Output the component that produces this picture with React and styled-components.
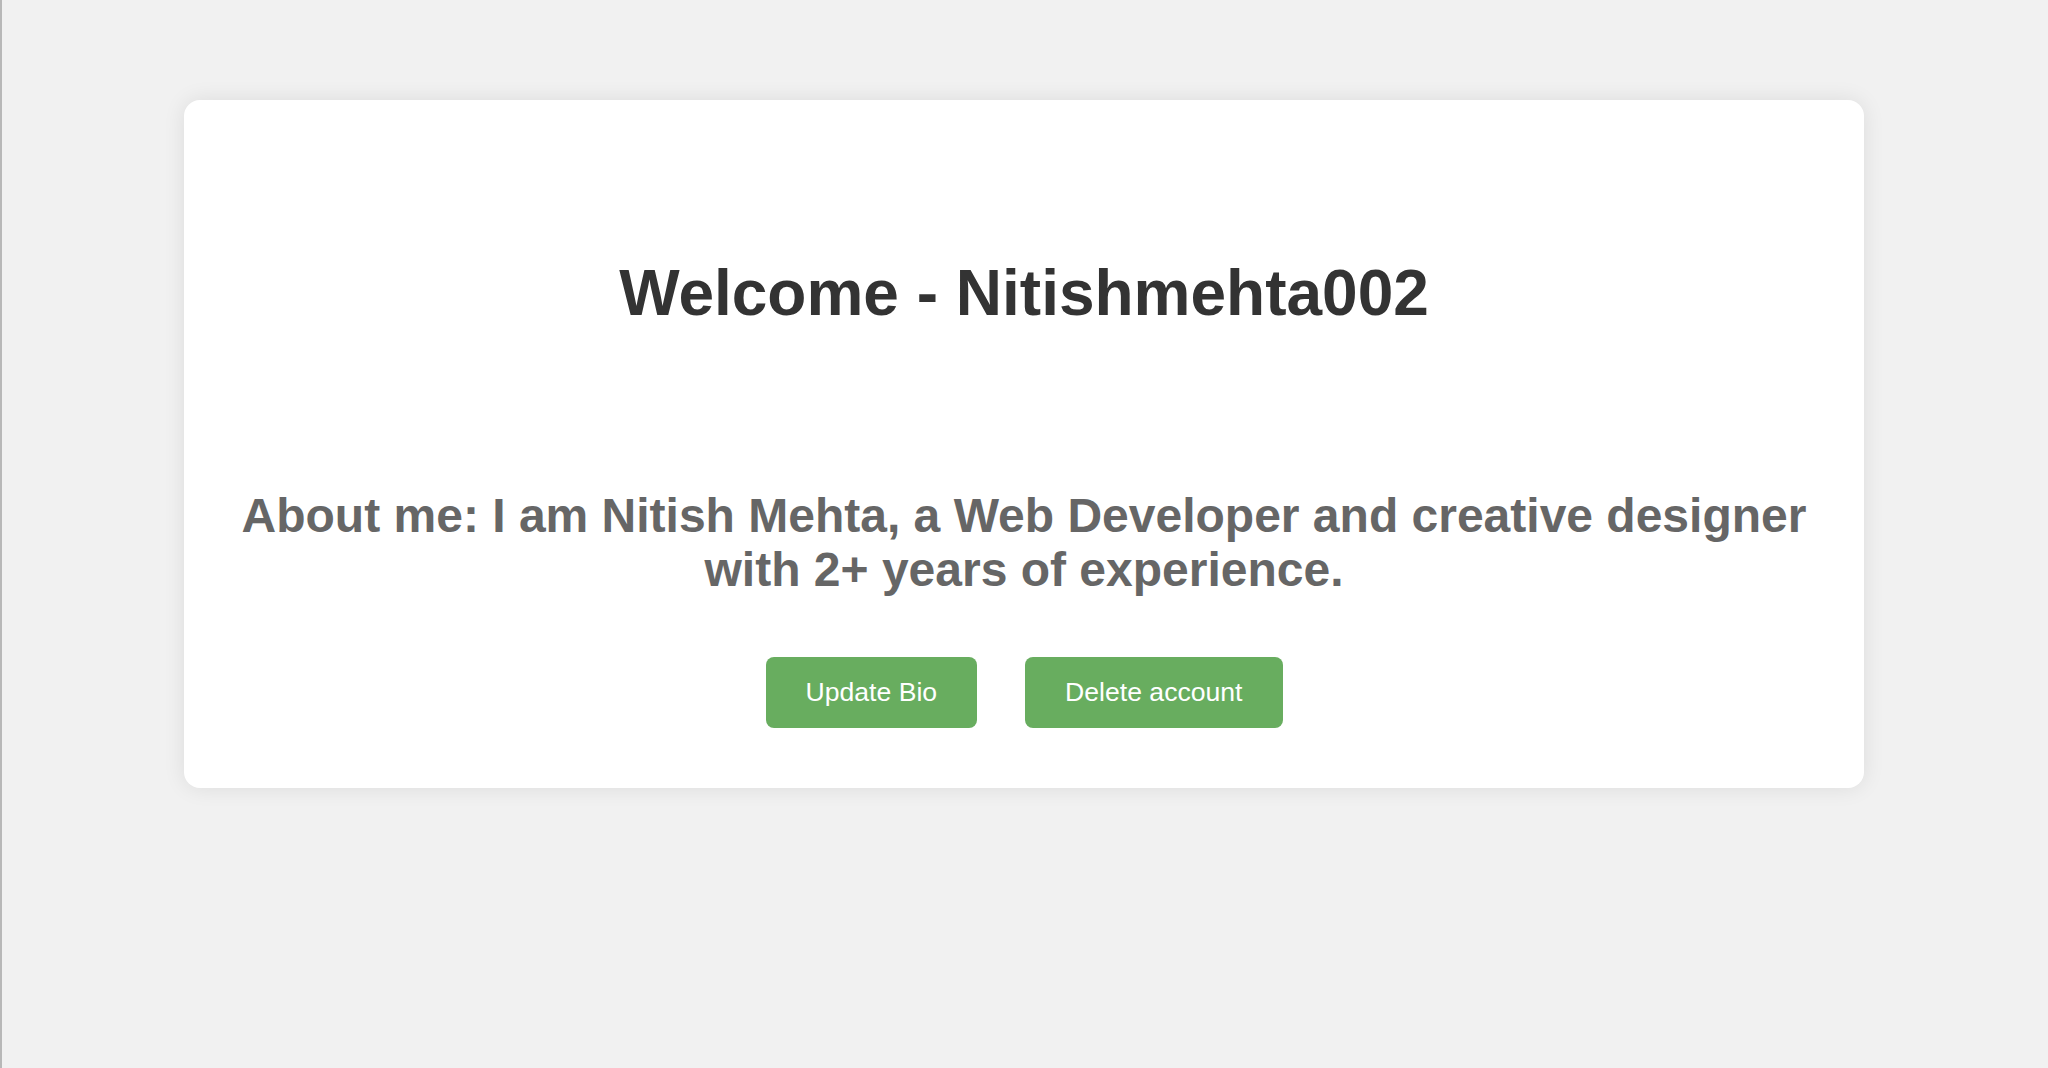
import { createGlobalStyle, styled } from "styled-components"

const GlobalStyle = createGlobalStyle`
    * {
        box-sizing: border-box;
    }
    body {
        margin: 0;
        background-color: #f1f1f1;
        font-family: "Liberation Sans", Arial, sans-serif;
    }
`

export default function App(){

    return(
        <SCPage>
            <GlobalStyle />
            <SCCard>
                <SCTitle>Welcome - Nitishmehta002</SCTitle>
                <SCBio>
                    About me: I am Nitish Mehta, a Web Developer and creative designer with 2+ years of experience.
                </SCBio>
                <SCActions>
                    <SCButton>Update Bio</SCButton>
                    <SCButton>Delete account</SCButton>
                </SCActions>
            </SCCard>
        </SCPage>
    )
}

const SCPage = styled.div`
    min-height: 100vh;
    background-color: #f1f1f1;
    padding-top: 100px;
    box-shadow: inset 2px 0 0 #b8b8b8;
`

const SCCard = styled.div`
    width: 1680px;
    margin: 0 auto;
    padding: 156px 40px 60px;
    background-color: #FFFFFF;
    border-radius: 16px;
    box-shadow: 0 0 22px rgba(0, 0, 0, 0.09);
    text-align: center;
`

const SCTitle = styled.h1`
    margin: 0 0 159px;
    font-size: 64px;
    line-height: 74px;
    font-weight: 700;
    color: #333333;
`

const SCBio = styled.p`
    margin: 0 0 60px;
    font-size: 48px;
    line-height: 54px;
    font-weight: 700;
    color: #666666;
`

const SCActions = styled.div`
    display: flex;
    justify-content: center;
    gap: 48px;
`

const SCButton = styled.button`
    border: none;
    border-radius: 8px;
    padding: 20px 40px;
    background-color: #68ad5f;
    color: #FFFFFF;
    font-family: "Liberation Sans", Arial, sans-serif;
    font-size: 26.6px;
    line-height: 31px;
    cursor: pointer;
`
